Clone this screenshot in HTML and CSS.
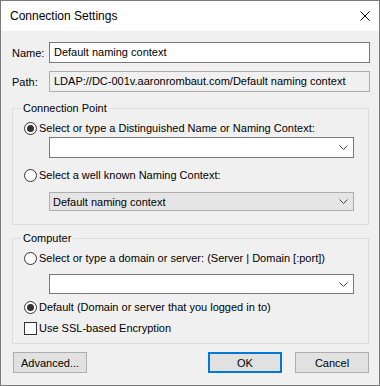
FILE: index.html
```html
<!DOCTYPE html>
<html lang="en">
<head>
  <meta charset="UTF-8">
  <title>Connection Settings</title>
  <link rel="stylesheet" href="styles.css">
</head>
<body>
  <div class="dialog">
    <div class="titlebar">
      <span class="title">Connection Settings</span>
      <svg class="close" width="10" height="10" viewBox="0 0 10 10">
        <path d="M0.5 0.5 L9.5 9.5 M9.5 0.5 L0.5 9.5" stroke="#000" stroke-width="1" fill="none"/>
      </svg>
    </div>

    <div class="content">
      <div class="field-row">
        <label>Name:</label>
        <div class="textbox">Default naming context</div>
      </div>
      <div class="field-row path-row">
        <label>Path:</label>
        <div class="textbox readonly">LDAP://DC-001v.aaronrombaut.com/Default naming context</div>
      </div>

      <fieldset class="group group-connection">
        <legend>Connection Point</legend>
        <div class="option first">
          <span class="radio checked"></span>
          <span>Select or type a Distinguished Name or Naming Context:</span>
        </div>
        <div class="combo combo-dn">
          <span class="combo-text"></span>
          <svg class="chevron" width="9" height="5" viewBox="0 0 9 5"><path d="M0.5 0.5 L4.5 4.5 L8.5 0.5" stroke="#444" fill="none"/></svg>
        </div>
        <div class="option second">
          <span class="radio"></span>
          <span>Select a well known Naming Context:</span>
        </div>
        <div class="combo combo-list">
          <span class="combo-text">Default naming context</span>
          <svg class="chevron" width="9" height="5" viewBox="0 0 9 5"><path d="M0.5 0.5 L4.5 4.5 L8.5 0.5" stroke="#444" fill="none"/></svg>
        </div>
      </fieldset>

      <fieldset class="group group-computer">
        <legend>Computer</legend>
        <div class="option first">
          <span class="radio"></span>
          <span>Select or type a domain or server: (Server | Domain [:port])</span>
        </div>
        <div class="combo combo-server">
          <span class="combo-text"></span>
          <svg class="chevron" width="9" height="5" viewBox="0 0 9 5"><path d="M0.5 0.5 L4.5 4.5 L8.5 0.5" stroke="#444" fill="none"/></svg>
        </div>
        <div class="option default-option">
          <span class="radio checked"></span>
          <span>Default (Domain or server that you logged in to)</span>
        </div>
        <div class="option ssl-option">
          <span class="checkbox"></span>
          <span>Use SSL-based Encryption</span>
        </div>
      </fieldset>

      <div class="buttons">
        <button class="btn">Advanced...</button>
        <span class="spacer"></span>
        <button class="btn btn-default">OK</button>
        <button class="btn">Cancel</button>
      </div>
    </div>
  </div>
</body>
</html>
```

FILE: styles.css
```css
* {
  margin: 0;
  padding: 0;
  box-sizing: border-box;
}

body {
  font-family: 'Liberation Sans', Arial, sans-serif;
  font-size: 11px;
  color: #000;
  background: #f0f0f0;
}

.dialog {
  width: 380px;
  height: 386px;
  border: 1px solid #7a7a7a;
  background: #f0f0f0;
}

.titlebar {
  height: 30px;
  background: #fff;
  display: flex;
  align-items: center;
  justify-content: space-between;
  padding: 0 9px 0 9px;
}

.title {
  font-size: 12px;
  line-height: 16px;
}

.close {
  display: block;
}

.content {
  padding: 11px 9px 0 11px;
}

.field-row {
  display: flex;
  align-items: center;
  height: 21px;
}

.path-row {
  margin-top: 8px;
}

.field-row label {
  width: 37px;
  flex: none;
}

.textbox {
  flex: 1;
  height: 21px;
  border: 1px solid #7a7a7a;
  background: #fff;
  padding: 0 4px;
  line-height: 19px;
  white-space: nowrap;
  overflow: hidden;
}

.textbox.readonly {
  border-color: #adadad;
  background: #f0f0f0;
}

.group {
  border: 1px solid #dcdcdc;
  margin-right: 1px;
  padding: 0 11px 0 11px;
}

.group legend {
  margin-left: -3px;
  padding: 0 2px;
  line-height: 16px;
}

.group-connection {
  margin-top: 8px;
  padding-bottom: 13px;
}

.group-computer {
  margin-top: 5px;
  padding-bottom: 7px;
}

.option {
  display: flex;
  align-items: center;
  gap: 2px;
  height: 16px;
  line-height: 16px;
  white-space: nowrap;
}

.option.first {
  margin-top: 4px;
}

.option.second {
  margin-top: 9px;
}

.option.default-option {
  margin-top: 5px;
}

.option.ssl-option {
  margin-top: 5px;
}

.radio {
  width: 13px;
  height: 13px;
  flex: none;
  border: 1px solid #333;
  border-radius: 50%;
  background: #fff;
  display: flex;
  align-items: center;
  justify-content: center;
}

.radio.checked::after {
  content: "";
  width: 7px;
  height: 7px;
  border-radius: 50%;
  background: #333;
}

.checkbox {
  width: 13px;
  height: 13px;
  flex: none;
  border: 1px solid #333;
  background: #fff;
}

.combo {
  display: flex;
  align-items: center;
  justify-content: space-between;
  margin-left: 25px;
  width: 305px;
  height: 21px;
  border: 1px solid #7a7a7a;
  background: #fff;
  padding: 0 5px 0 4px;
}

.combo-dn {
  margin-top: 1px;
}

.combo-list {
  margin-top: 9px;
  height: 19px;
  padding-left: 3px;
  border-color: #adadad;
  background: #e5e5e5;
}

.combo-server {
  margin-top: 8px;
  height: 20px;
}

.chevron {
  display: block;
}

.buttons {
  display: flex;
  align-items: center;
  margin-top: 8px;
  margin-left: 1px;
  margin-right: 1px;
  gap: 13px;
}

.spacer {
  flex: 1;
}

.btn {
  width: 74px;
  height: 21px;
  font-family: inherit;
  font-size: 11px;
  color: #000;
  background: #e1e1e1;
  border: 1px solid #adadad;
}

.btn-default {
  border: 2px solid #0078d7;
}
```
